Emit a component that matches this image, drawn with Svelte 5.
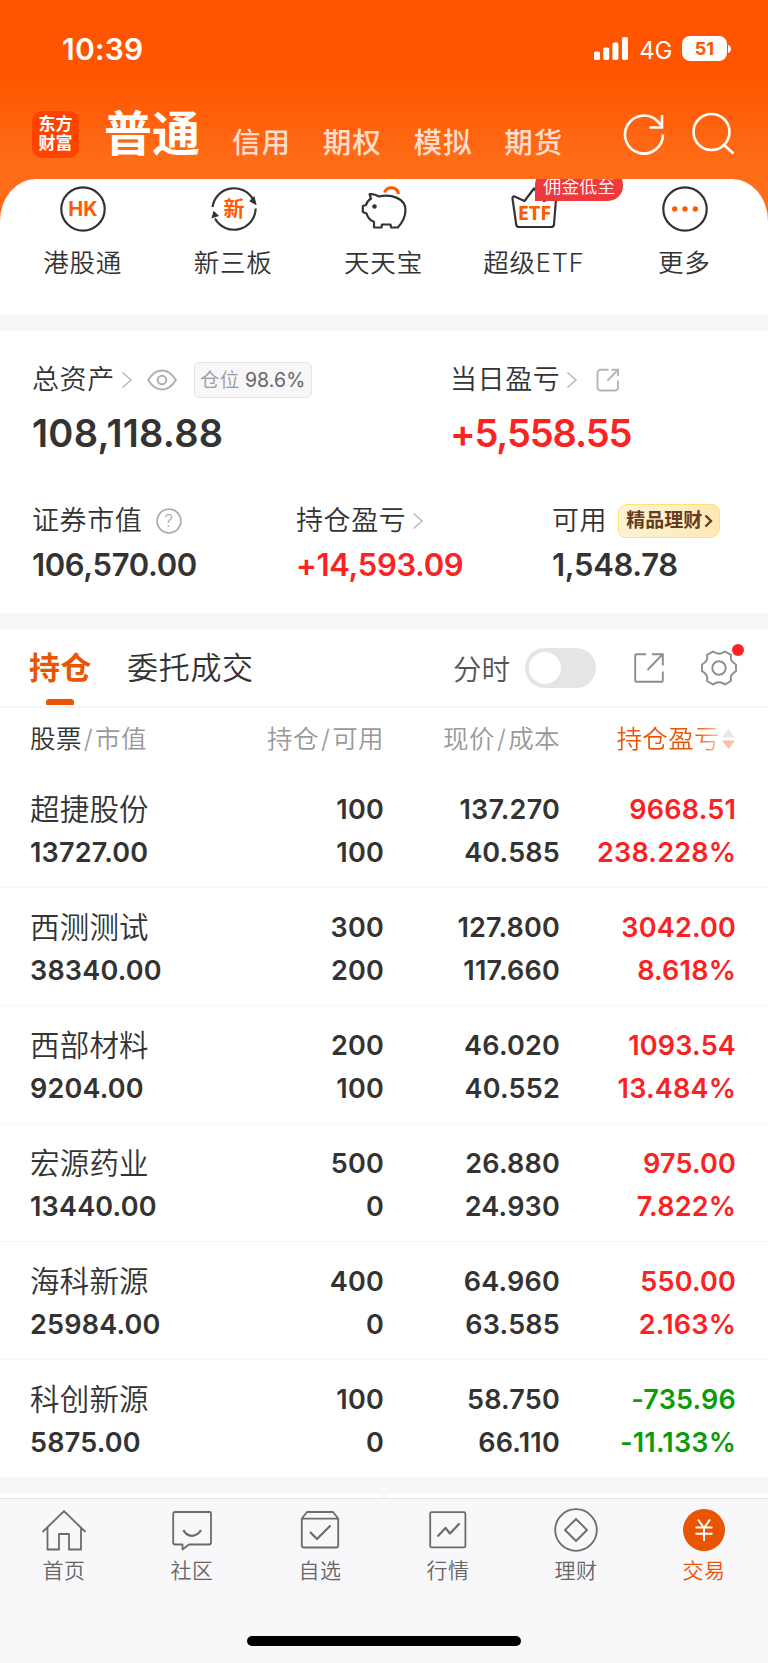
<script lang="ts">
  type Holding = {
    name: string
    value: string
    amount: string
    available: string
    price: string
    cost: string
    profit: string
    rate: string
  }

  const markets = ['信用', '期权', '模拟', '期货']

  const shortcuts = [
    { icon: 'hk', label: '港股通' },
    { icon: 'neeq', label: '新三板' },
    { icon: 'pig', label: '天天宝' },
    { icon: 'etf', label: '超级ETF', badge: '佣金低至' },
    { icon: 'more', label: '更多' },
  ]

  const holdings: Holding[] = [
    { name: '超捷股份', value: '13727.00', amount: '100', available: '100', price: '137.270', cost: '40.585', profit: '9668.51', rate: '238.228%' },
    { name: '西测测试', value: '38340.00', amount: '300', available: '200', price: '127.800', cost: '117.660', profit: '3042.00', rate: '8.618%' },
    { name: '西部材料', value: '9204.00', amount: '200', available: '100', price: '46.020', cost: '40.552', profit: '1093.54', rate: '13.484%' },
    { name: '宏源药业', value: '13440.00', amount: '500', available: '0', price: '26.880', cost: '24.930', profit: '975.00', rate: '7.822%' },
    { name: '海科新源', value: '25984.00', amount: '400', available: '0', price: '64.960', cost: '63.585', profit: '550.00', rate: '2.163%' },
    { name: '科创新源', value: '5875.00', amount: '100', available: '0', price: '58.750', cost: '66.110', profit: '-735.96', rate: '-11.133%' },
  ]

  const tabs = ['首页', '社区', '自选', '行情', '理财', '交易']

  let activeTab = $state('交易')
  let minuteChart = $state(false)
</script>

{#snippet chevron()}
  <svg class="chevron" width="12" height="18" viewBox="0 0 12 18">
    <path d="M1.500 1.500 10 9l-8.500 7.500" fill="none" stroke="#bbb" stroke-width="1.600" />
  </svg>
{/snippet}

<div class="screen">
  <header>
    <div class="status">
      <span class="time">10:39</span>
      <svg width="34" height="23" viewBox="0 0 34 23" fill="#fff">
        <rect x="0" y="14.500" width="6" height="8.500" rx="1.800" />
        <rect x="9.200" y="10.500" width="6" height="12.500" rx="1.800" />
        <rect x="18.400" y="5.500" width="6" height="17.500" rx="1.800" />
        <rect x="28" y="0" width="6" height="23" rx="1.800" />
      </svg>
      <span class="network">4G</span>
      <span class="battery">51</span>
      <svg class="nub" width="4" height="8" viewBox="0 0 4 8">
        <path d="M0 0c4 1 4 7 0 8z" fill="#fff" />
      </svg>
    </div>

    <div class="top-nav">
      <div class="logo"><span>东方</span><span>财富</span></div>
      <h1>普通</h1>
      <nav class="markets">
        {#each markets as market}
          <span>{market}</span>
        {/each}
      </nav>
      <svg class="refresh" width="44" height="44" viewBox="0 0 44 44" fill="none" stroke="#fff" stroke-width="2.600">
        <path d="M41 22.500A19 19 0 1 1 35.800 9.500L39 13" />
        <path d="M40 3v12.500H27.500" />
      </svg>
      <svg width="44" height="44" viewBox="0 0 44 44" fill="none" stroke="#fff" stroke-width="2.600">
        <circle cx="20.500" cy="20" r="18" />
        <path d="m33 33 9.500 8.500" />
      </svg>
    </div>
  </header>

  <section class="shortcuts-wrap">
    <div class="shortcuts">
      {#each shortcuts as item}
        <div class="shortcut">
          <svg width="46" height="46" viewBox="0 0 46 46" fill="none" stroke="#333" stroke-width="2.200">
            {#if item.icon === 'hk'}
              <circle cx="23" cy="23" r="21.700" />
              <text x="23" y="30" class="hk">HK</text>
            {:else if item.icon === 'neeq'}
              <path d="M1.500 21A21.700 21.700 0 0 1 42 13.500" />
              <path d="M44.700 22.500A21.700 21.700 0 0 1 4 32.500" />
              <path d="m40 15 2.800-2.800 1.200 5zM2 30.800l1.200-4 2.800 2.800z" fill="#333" />
              <text x="23" y="30" class="neeq">新</text>
            {:else if item.icon === 'pig'}
              <path
                d="M8.500 8.200C12 7.800 15 8.500 18 10.500 30 8 45 12 44.500 24.500 44.300 31 41 37 36.800 41.500H30.200L29.500 38.500H21L20.500 41.500H13V35.800Q7.500 34 5.500 27.500L1.800 26V20L5 19Q6 15 10 12.500Z"
                stroke-linejoin="round"
              />
              <circle cx="13.500" cy="20.500" r="2.300" fill="#333" stroke="none" />
              <path d="M23.500 6.500C26 0 36 0 37.500 8" stroke="#ff5a00" stroke-width="3" />
            {:else if item.icon === 'etf'}
              <path
                d="M3.500 10.500 13.500 15 23 2.500 33 15 43 10.800Q45.200 10.500 45 13L43 38.500Q42.700 41 40 41H8Q5.500 41 5.200 38.500L1.500 12.500Q1.500 10 3.500 10.500Z"
                stroke-linejoin="round"
              />
              <text x="23.500" y="34" class="etf">ETF</text>
            {:else}
              <circle cx="23" cy="23" r="21.700" />
              <g fill="#ff5a00" stroke="none">
                <circle cx="12.700" cy="23" r="2.700" />
                <circle cx="23" cy="23" r="2.700" />
                <circle cx="33.300" cy="23" r="2.700" />
              </g>
            {/if}
          </svg>
          <span class="shortcut-label">{item.label}</span>
          {#if item.badge}
            <span class="badge">{item.badge}</span>
          {/if}
        </div>
      {/each}
    </div>
  </section>

  <section class="assets">
    <div class="totals">
      <div>
        <div class="label">
          总资产{@render chevron()}
          <svg class="eye" width="30" height="22" viewBox="0 0 30 22" fill="none" stroke="#b0b0b0" stroke-width="2">
            <path d="M1.200 11Q7 1.500 15 1.500T28.800 11Q23 20.500 15 20.500T1.200 11Z" />
            <circle cx="15" cy="11" r="4.300" />
          </svg>
          <span class="position">仓位 <b>98.6%</b></span>
        </div>
        <div class="big">108,118.88</div>
      </div>
      <div>
        <div class="label">
          当日盈亏{@render chevron()}
          <svg class="share" width="24" height="24" viewBox="0 0 24 24" fill="none" stroke="#b5b5b5" stroke-width="1.900">
            <path d="M12.500 1.800H5Q1.500 1.800 1.500 5.300V19Q1.500 22.500 5 22.500H18.500Q22 22.500 22 19V12.500" />
            <path d="M15.500 1.800H22V8M22 1.800 11.500 12.500" />
          </svg>
        </div>
        <div class="big up">+5,558.55</div>
      </div>
    </div>
    <div class="details">
      <div>
        <div class="label">
          证券市值
          <svg class="help" width="26" height="26" viewBox="0 0 26 26">
            <circle cx="13" cy="13" r="11.900" fill="none" stroke="#aaa" stroke-width="1.700" />
            <text x="13" y="19.300">?</text>
          </svg>
        </div>
        <div class="mid">106,570.00</div>
      </div>
      <div>
        <div class="label">持仓盈亏{@render chevron()}</div>
        <div class="mid up">+14,593.09</div>
      </div>
      <div>
        <div class="label">
          可用
          <span class="wealth">
            精品理财
            <svg width="9" height="14" viewBox="0 0 9 14">
              <path d="m1.500 1.500 5.500 5.500-5.500 5.500" fill="none" stroke="#653b22" stroke-width="2.400" />
            </svg>
          </span>
        </div>
        <div class="mid">1,548.78</div>
      </div>
    </div>
  </section>

  <section class="positions">
    <div class="toolbar">
      <span class="view active">持仓</span>
      <span class="view">委托成交</span>
      <span class="minute">分时</span>
      <button
        class="switch"
        class:on={minuteChart}
        aria-label="分时"
        onclick={() => (minuteChart = !minuteChart)}
      ></button>
      <svg class="export" width="30" height="30" viewBox="0 0 30 30" fill="none" stroke="#8c8c8c" stroke-width="1.900">
        <path d="M12 1.200H2.500Q1.200 1.200 1.200 2.500V27.500Q1.200 28.800 2.500 28.800H27.500Q28.800 28.800 28.800 27.500V18.500" />
        <path d="M18 1.200H28.800V12.500M28.800 1.200 13.500 17" />
      </svg>
      <span class="settings">
        <svg width="36" height="36" viewBox="0 0 36 35" fill="none" stroke="#8c8c8c" stroke-width="1.900">
          <path
            d="M12 1Q18 5.500 24 1L30 4.300Q28.500 11 35 14V20.700Q28.500 24 30 30.500L24 34Q18 29.500 12 34L6 30.500Q7.500 24 1 20.700V14Q7.500 11 6 4.300Z"
            stroke-linejoin="round"
          />
          <circle cx="18" cy="17.500" r="6.700" />
        </svg>
        <i></i>
      </span>
    </div>

    <div class="row head">
      <span class="first"><b>股票</b><s>/</s>市值</span>
      <span>持仓<s>/</s>可用</span>
      <span>现价<s>/</s>成本</span>
      <span class="sorted">
        <em>持仓盈亏</em>
        <svg width="15" height="22" viewBox="0 0 15 22">
          <path d="m7.500 1 6.500 8.500H1z" fill="#e8e8ea" />
          <path d="m7.500 21 6.500-8.500H1z" fill="#f9c0a3" />
        </svg>
      </span>
    </div>

    {#each holdings as h}
      <div class="row">
        <div class="first"><div class="name">{h.name}</div><div>{h.value}</div></div>
        <div><div>{h.amount}</div><div>{h.available}</div></div>
        <div><div>{h.price}</div><div>{h.cost}</div></div>
        <div class={h.profit.startsWith('-') ? 'down' : 'up'}>
          <div>{h.profit}</div>
          <div>{h.rate}</div>
        </div>
      </div>
    {/each}
  </section>

  <div class="next-cards"><span></span><span></span></div>

  <footer>
    <nav class="tabbar">
      {#each tabs as tab, i}
        <button class="tab" class:current={activeTab === tab} onclick={() => (activeTab = tab)}>
          <svg width="46" height="46" viewBox="0 0 46 46" fill="none" stroke="#6b6b6b" stroke-width="1.800" stroke-linejoin="round">
            {#if i === 0}
              <path d="M1.500 25 23 4.200 44.500 25M6.500 20.500V42.500H18V27H28V42.500H40V20.500" />
            {:else if i === 1}
              <path d="M6 5H40.500Q42 5 42 6.500V35.500Q42 37.500 40 37.500H20L13.500 42.500V37.500H6Q4.200 37.500 4.200 35.500V7Q4.200 5 6 5Z" />
              <path d="M14.500 23Q17 28.500 23 28.800 29 28.500 32 23" stroke-width="2.200" />
            {:else if i === 2}
              <path d="M4.800 11.500 10 5H36L41.200 11.500V38.500Q41.200 40.500 39.200 40.500H6.800Q4.800 40.500 4.800 38.500ZM4.800 11.700H41.200" />
              <path d="M13 25 20 32 33.500 18.500" stroke-width="2.200" />
            {:else if i === 3}
              <rect x="5.200" y="5.200" width="35.200" height="35.200" rx="1.500" />
              <path d="M12.500 29.500 20.500 21 25 26.500 34.500 16.500" stroke-width="2.200" />
            {:else if i === 4}
              <circle cx="23" cy="23" r="20.800" />
              <path d="M23 12 34 23 23 34 12 23Z" />
            {:else}
              <circle cx="23" cy="23" r="21" fill="#ea5504" stroke="none" />
              <path d="M17 12.500 23 21 29 12.500M14.500 20.500H31.500M14.500 26.800H31.500M23 21V34" stroke="#fff" stroke-width="2" />
            {/if}
          </svg>
          <span>{tab}</span>
        </button>
      {/each}
    </nav>
    <div class="home-bar"></div>
  </footer>
</div>

<style>
  :global(body) {
    background: #fff;
  }

  .screen {
    display: flex;
    flex-direction: column;
    width: 768px;
    height: 1663px;
    overflow: hidden;
    background: #fff;
    color: #333;
    font-family: Inter, 'Noto Sans CJK SC', sans-serif;
    font-weight: 350;
  }

  svg {
    display: block;
    flex: none;
  }

  button {
    padding: 0;
    border: 0;
    background: none;
    font: inherit;
  }

  .up {
    color: #fa2222;
  }

  .down {
    color: #0a9c0a;
  }

  header {
    flex: none;
    height: 179px;
    background: linear-gradient(#ff5500 75px, #ff6d18 165px);
    color: #fff;
  }

  .status {
    display: flex;
    align-items: center;
    height: 97px;
    padding: 0 36px 2px 62px;
  }

  .time {
    flex: 1;
    font-size: 30px;
    font-weight: 600;
    letter-spacing: 0.2px;
  }

  .network {
    margin: 3px 10px 0 11px;
    font-size: 24px;
    font-weight: 400;
    letter-spacing: -0.3px;
  }

  .battery {
    width: 45px;
    height: 25px;
    border-radius: 8px;
    background: #fff;
    color: #ff5500;
    font-size: 18px;
    font-weight: 700;
    line-height: 26px;
    text-align: center;
  }

  .nub {
    margin-left: 1px;
  }

  .top-nav {
    display: flex;
    align-items: center;
    height: 70px;
    padding: 0 33px 0 32px;
  }

  .logo {
    display: flex;
    flex-direction: column;
    justify-content: center;
    width: 47px;
    height: 47px;
    border-radius: 10px;
    background: #ff4300;
    font-size: 17px;
    font-weight: 700;
    line-height: 19.5px;
    text-align: center;
  }

  h1 {
    margin: 0 0 0 25px;
    font-size: 48px;
    font-weight: 700;
    line-height: 70px;
  }

  .markets {
    display: flex;
    flex: 1;
    gap: 31.7px;
    margin: 17px 0 0 32px;
    color: rgba(255, 255, 255, 0.8);
    font-size: 28.5px;
    font-weight: 500;
    line-height: 40px;
    letter-spacing: 1px;
  }

  .refresh {
    margin-right: 25px;
  }

  .shortcuts-wrap {
    flex: none;
    height: 136px;
    background: linear-gradient(#ff6d18 50px, #fff 50px);
    border-bottom: 16px solid #f5f7f9;
  }

  .shortcuts {
    display: grid;
    grid-template-columns: repeat(5, 1fr);
    height: 136px;
    padding: 7px 8px 0;
    box-sizing: border-box;
    overflow: hidden;
    border-radius: 36px 36px 0 0 / 42px 42px 0 0;
    background: #fff;
  }

  .shortcut {
    position: relative;
    display: flex;
    flex-direction: column;
    align-items: center;
  }

  .shortcut text {
    stroke: none;
    fill: #ff5a00;
    font-weight: 700;
    text-anchor: middle;
  }

  .hk {
    font-size: 20px;
  }

  .neeq {
    font-size: 21px;
  }

  .etf {
    font-family: 'Noto Sans', sans-serif;
    font-size: 20px;
  }

  .shortcut-label {
    margin: 11px 1px 0 0;
    font-size: 25.5px;
    line-height: 40px;
    letter-spacing: 0.8px;
  }

  .badge {
    position: absolute;
    top: -16px;
    left: 76px;
    width: 88px;
    height: 31px;
    border-radius: 15px 15px 15px 0;
    background: #ee3a3d;
    color: #fff;
    font-size: 18px;
    line-height: 33px;
    text-align: center;
  }

  .assets {
    flex: none;
    height: 282px;
    padding: 28px 33px 0 32px;
    box-sizing: border-box;
  }

  .totals,
  .details {
    display: grid;
  }

  .totals {
    grid-template-columns: 418px 1fr;
    height: 141px;
  }

  .details {
    grid-template-columns: 264px 256px 1fr;
  }

  .label {
    display: flex;
    align-items: center;
    height: 42px;
    font-size: 27px;
    line-height: 42px;
    letter-spacing: 0.6px;
    white-space: nowrap;
  }

  .chevron {
    margin-left: 6px;
  }

  .eye {
    margin-left: 14px;
  }

  .share {
    margin-left: 18px;
  }

  .help {
    margin-left: 14px;
  }

  .help text {
    fill: #aaa;
    font-size: 17px;
    text-anchor: middle;
  }

  .position {
    width: 116px;
    height: 34px;
    margin-left: 17px;
    border: 1px solid #e3e3e8;
    border-radius: 5px;
    background: #f7f7fa;
    color: #999;
    font-size: 19.5px;
    line-height: 35px;
    text-align: center;
    letter-spacing: 0.1px;
  }

  .position b {
    color: #666;
    font-weight: 400;
  }

  .big {
    height: 65px;
    font-size: 38px;
    font-weight: 600;
    line-height: 65px;
    letter-spacing: 0.25px;
  }

  .big.up {
    letter-spacing: -1.1px;
  }

  .mid {
    font-size: 31px;
    font-weight: 600;
    line-height: 46px;
    letter-spacing: -0.35px;
  }

  .wealth {
    display: flex;
    align-items: center;
    gap: 2px;
    height: 32px;
    margin-left: 11px;
    padding: 0 6px 0 7px;
    border: 1.5px solid #ffe07a;
    border-radius: 9px 8px 10px 7px;
    background: linear-gradient(100deg, #fff3d6, #fee9b4);
    color: #653b22;
    font-size: 19px;
    font-weight: 700;
    letter-spacing: 0;
  }

  .positions {
    flex: none;
    border-top: 16px solid #f5f7f9;
  }

  .toolbar {
    display: flex;
    align-items: center;
    height: 77px;
    padding: 0 31px 0 29px;
    border-bottom: 2px solid #f5f6f8;
  }

  .view {
    position: relative;
    margin-right: 35px;
    font-size: 31px;
    line-height: 77px;
    letter-spacing: 0.7px;
  }

  .view.active {
    color: #ea5504;
    font-weight: 700;
    letter-spacing: 0.5px;
  }

  .view.active::after {
    position: absolute;
    bottom: 1px;
    left: 17px;
    width: 28px;
    height: 6px;
    border-radius: 3px 3px 1px 1px;
    background: #ea5504;
    content: '';
  }

  .minute {
    margin-left: auto;
    color: #555;
    font-size: 28.5px;
  }

  .switch {
    width: 71px;
    height: 40px;
    margin-left: 15px;
    padding: 4px;
    border-radius: 20px;
    background: #e4e5e7;
  }

  .switch::before {
    display: block;
    width: 32px;
    height: 32px;
    border-radius: 50%;
    background: #fff;
    content: '';
  }

  .switch.on {
    background: #ea5504;
  }

  .switch.on::before {
    margin-left: 31px;
  }

  .export {
    margin: 0 37px 0 38px;
  }

  .settings {
    position: relative;
  }

  .settings i {
    position: absolute;
    top: -6px;
    right: -7px;
    width: 12px;
    height: 12px;
    border-radius: 50%;
    background: #fa2222;
  }

  .row {
    display: grid;
    grid-template-columns: 174px 180px 176px 176px;
    height: 118.1px;
    padding: 18.5px 0 0 30px;
    box-sizing: border-box;
    border-bottom: 1.5px solid #f5f6f8;
    font-size: 27px;
    font-weight: 600;
    line-height: 43px;
    letter-spacing: 0.2px;
    text-align: right;
  }

  .first {
    text-align: left;
  }

  .name {
    font-size: 29.5px;
    font-weight: 350;
    letter-spacing: 0.2px;
  }

  .head {
    height: 61.5px;
    padding-top: 0;
    border: 0;
    color: #999;
    font-size: 25.5px;
    font-weight: 350;
    line-height: 61px;
    letter-spacing: 0.4px;
    white-space: nowrap;
  }

  .head b {
    color: #333;
    font-weight: 350;
  }

  .head s {
    padding: 0 2px;
    text-decoration: none;
  }

  .sorted {
    display: flex;
    align-items: center;
    justify-content: flex-end;
    gap: 1px;
  }

  .sorted em {
    background: linear-gradient(90deg, #ea5504 78%, #fbd3bd);
    background-clip: text;
    color: transparent;
    font-style: normal;
  }

  .next-cards {
    display: flex;
    flex: none;
    gap: 4px;
    height: 4px;
    padding-top: 16px;
    background: #f5f7f9;
  }

  .next-cards span {
    flex: 1;
    background: #fff;
  }

  footer {
    flex: 1;
    border-top: 1.5px solid #e3e4e6;
    background: #f8f8fb;
  }

  .tabbar {
    display: grid;
    grid-template-columns: repeat(6, 1fr);
    height: 137px;
    padding-top: 8px;
    box-sizing: border-box;
  }

  .tab {
    display: flex;
    flex-direction: column;
    align-items: center;
    color: #666;
    font-size: 21px;
    line-height: 36px;
    letter-spacing: 0.4px;
  }

  .tab.current {
    color: #ea5504;
  }

  .home-bar {
    width: 274px;
    height: 10px;
    margin: 0 auto;
    border-radius: 5px;
    background: #000;
  }
</style>
